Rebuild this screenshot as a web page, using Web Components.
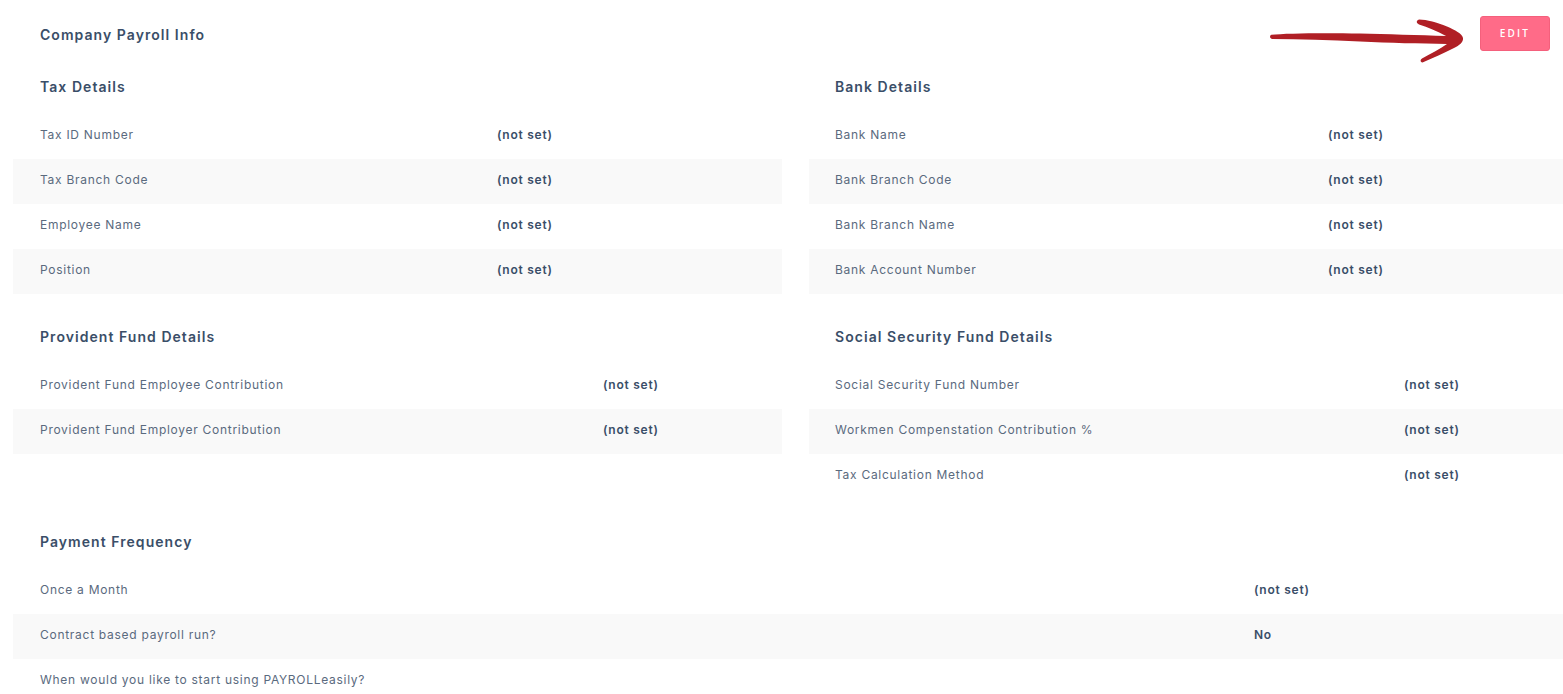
<!DOCTYPE html>
<html lang="en">
<head>
<meta charset="utf-8">
<title>Company Payroll Info</title>
<style>
html, body { margin: 0; overflow: hidden; background: #fff; }
body { font-family: Inter, "Liberation Sans", sans-serif; }
</style>
</head>
<body>
<payroll-page>
  <payroll-section slot="top" heading="Tax Details" label-width="484">
    <payroll-row label="Tax ID Number">(not set)</payroll-row>
    <payroll-row label="Tax Branch Code">(not set)</payroll-row>
    <payroll-row label="Employee Name">(not set)</payroll-row>
    <payroll-row label="Position">(not set)</payroll-row>
  </payroll-section>
  <payroll-section slot="top" heading="Bank Details" label-width="519" style="--inset: 26px">
    <payroll-row label="Bank Name">(not set)</payroll-row>
    <payroll-row label="Bank Branch Code">(not set)</payroll-row>
    <payroll-row label="Bank Branch Name">(not set)</payroll-row>
    <payroll-row label="Bank Account Number">(not set)</payroll-row>
  </payroll-section>
  <payroll-section slot="top" heading="Provident Fund Details" label-width="590">
    <payroll-row label="Provident Fund Employee Contribution">(not set)</payroll-row>
    <payroll-row label="Provident Fund Employer Contribution">(not set)</payroll-row>
  </payroll-section>
  <payroll-section slot="top" heading="Social Security Fund Details" label-width="595" style="--inset: 26px">
    <payroll-row label="Social Security Fund Number">(not set)</payroll-row>
    <payroll-row label="Workmen Compenstation Contribution %">(not set)</payroll-row>
    <payroll-row label="Tax Calculation Method">(not set)</payroll-row>
  </payroll-section>
  <payroll-section slot="bottom" heading="Payment Frequency" label-width="1241">
    <payroll-row label="Once a Month">(not set)</payroll-row>
    <payroll-row label="Contract based payroll run?">No</payroll-row>
    <payroll-row label="When would you like to start using PAYROLLeasily?"></payroll-row>
  </payroll-section>
</payroll-page>
<script>
// Define the page element.
const pageTemplate = document.createElement('template')
pageTemplate.innerHTML = `
<style>
:host {
  display: block;
  position: relative;
  width: 1563px;
  height: 694px;
  overflow: hidden;
  color: #3a4e68;
}
header {
  display: flex;
  justify-content: space-between;
  align-items: flex-start;
  height: 60px;
  padding: 0 13px 0 40px;
}
h1 {
  margin: 0;
  padding-top: 26px;
  font-size: 14px;
  line-height: 17px;
  font-weight: 600;
  letter-spacing: 1.05px;
}
button {
  box-sizing: border-box;
  width: 70px;
  height: 35px;
  margin-top: 16px;
  padding: 0 0 2px 0;
  border: 1px solid #f4607c;
  border-radius: 3px;
  background: #ff6b88;
  color: #fff;
  font: 600 10px "Open Sans", sans-serif;
  letter-spacing: 2.2px;
}
.grid {
  display: grid;
  grid-template-columns: 769px 754px;
  column-gap: 27px;
  row-gap: 16px;
  padding-left: 13px;
}
.bottom {
  padding: 16px 0 0 13px;
  width: 1550px;
}
svg {
  position: absolute;
  left: 0;
  top: 0;
  pointer-events: none;
}
</style>
<header>
  <h1>Company Payroll Info</h1>
  <button>EDIT</button>
</header>
<div class="grid"><slot name="top"></slot></div>
<div class="bottom"><slot name="bottom"></slot></div>
<svg width="1563" height="70" viewBox="0 0 1563 70" aria-hidden="true">
  <path fill="#b01f25" d="M1271.5 34.8 C1285 33.2 1327 32.8 1360 33.6 C1385 34.2 1420 35.4 1446 36 C1437 31 1428 27.5 1419 24.5 C1416 23 1416 20.5 1419 19.5 C1427 19.5 1437 22.5 1447 26.5 C1455 30 1462 33.5 1463 38 C1463.5 42 1460 45 1454 48 C1444 53 1433 58 1422.5 62.5 C1420 62 1420 60 1422 58.5 C1430 54 1440 49 1447 44 C1420 43.5 1390 43 1360 41.5 C1330 40 1300 39.4 1272 39 C1269.5 38 1269.5 35.6 1271.5 34.8 Z"/>
</svg>
`

// Define the section element.
const sectionTemplate = document.createElement('template')
sectionTemplate.innerHTML = `
<style>
:host {
  display: block;
}
h2 {
  margin: 0;
  height: 54px;
  box-sizing: border-box;
  padding: 18px 0 0 var(--inset, 27px);
  font-size: 14px;
  line-height: 17px;
  font-weight: 600;
  letter-spacing: 1.05px;
}
::slotted(payroll-row:nth-child(even)) {
  background: #f9f9f9;
}
</style>
<h2></h2>
<slot></slot>
`

// Define the row element.
const rowTemplate = document.createElement('template')
rowTemplate.innerHTML = `
<style>
:host {
  display: grid;
  grid-template-columns: var(--label-width, 484px) 1fr;
  align-items: center;
  box-sizing: border-box;
  height: 45px;
  padding-bottom: 4px;
  font-size: 12px;
}
.label {
  padding-left: var(--inset, 27px);
  color: #5a6a7e;
  letter-spacing: 0.72px;
  white-space: nowrap;
}
.value {
  font-weight: 600;
  letter-spacing: 0.75px;
}
</style>
<span class="label"></span>
<span class="value"><slot></slot></span>
`

customElements.define('payroll-page',
  /**
   * Represents the whole payroll info page.
   */
  class extends HTMLElement {
    /**
     * Creates an instance of the current type.
     */
    constructor () {
      super()
      this.attachShadow({ mode: 'open' })
        .appendChild(pageTemplate.content.cloneNode(true))
    }
  }
)

customElements.define('payroll-section',
  /**
   * Represents a headed group of rows.
   */
  class extends HTMLElement {
    /**
     * Creates an instance of the current type.
     */
    constructor () {
      super()
      this.attachShadow({ mode: 'open' })
        .appendChild(sectionTemplate.content.cloneNode(true))
    }

    /**
     * Sets the heading text and the width of the label column.
     */
    connectedCallback () {
      this.shadowRoot.querySelector('h2').textContent = this.getAttribute('heading')
      this.style.setProperty('--label-width', this.getAttribute('label-width') + 'px')
    }
  }
)

customElements.define('payroll-row',
  /**
   * Represents one label and value row.
   */
  class extends HTMLElement {
    /**
     * Creates an instance of the current type.
     */
    constructor () {
      super()
      this.attachShadow({ mode: 'open' })
        .appendChild(rowTemplate.content.cloneNode(true))
    }

    /**
     * Sets the label text.
     */
    connectedCallback () {
      this.shadowRoot.querySelector('.label').textContent = this.getAttribute('label')
    }
  }
)
</script>
</body>
</html>
